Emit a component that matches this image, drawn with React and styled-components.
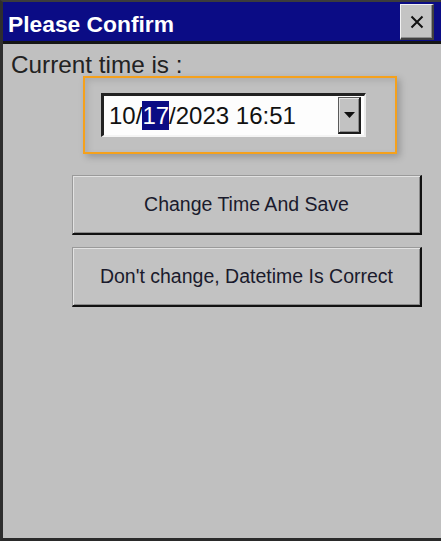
import React from 'react';
import styled, { createGlobalStyle } from 'styled-components';

const GlobalStyle = createGlobalStyle`
  html, body {
    margin: 0;
    padding: 0;
    background: #c0c0c0;
  }
  * {
    box-sizing: border-box;
  }
`;

const Window = styled.div`
  width: 441px;
  height: 541px;
  display: flex;
  flex-direction: column;
  background: #c0c0c0;
  border-top: 2px solid #3c3c3c;
  border-left: 3px solid #2e2e2e;
  border-bottom: 3px solid #2a2a2a;
  font-family: 'Liberation Sans', Arial, sans-serif;
`;

const TitleBar = styled.div`
  height: 42px;
  display: flex;
  align-items: flex-start;
  justify-content: space-between;
  background: #0b0c85;
  border-bottom: 3px solid #151515;
  padding-left: 5px;
`;

const Title = styled.span`
  margin-top: 9px;
  font-size: 22.8px;
  line-height: 26px;
  font-weight: bold;
  color: #ffffff;
`;

const CloseButton = styled.button`
  width: 34px;
  height: 36px;
  margin-top: 2px;
  margin-right: 7px;
  padding: 0;
  display: flex;
  align-items: center;
  justify-content: center;
  background: #c4c4c4;
  border-style: solid;
  border-width: 1px 2px 2px 1px;
  border-color: #f2f2f2 #404040 #404040 #f2f2f2;
  box-shadow: inset -1px -1px 0 #8c8c8c;
  cursor: pointer;
`;

const Body = styled.div`
  flex: 1;
  display: flex;
  flex-direction: column;
  padding: 10px 8px 0 8px;
`;

const Label = styled.div`
  font-size: 24.3px;
  line-height: 22px;
  height: 22px;
  color: #222;
  white-space: nowrap;
`;

const Focus = styled.div`
  width: 314px;
  height: 78px;
  margin-left: 72px;
  padding: 15px 0 0 16px;
  border: 2px solid #f5a11c;
  box-shadow: 3px 3px 7px rgba(0, 0, 0, 0.22), inset 3px 3px 6px rgba(0, 0, 0, 0.1);
`;

const DateField = styled.div`
  width: 265px;
  height: 44px;
  display: flex;
  align-items: center;
  justify-content: space-between;
  background: #fdfdfd;
  border-style: solid;
  border-width: 3px 2px 2px 3px;
  border-color: #222 #ececec #f4f4f4 #222;
  padding: 0 3px 0 5px;
`;

const DateText = styled.span`
  font-size: 24px;
  line-height: 29px;
  color: #111;
  white-space: nowrap;
`;

const Selected = styled.span`
  display: inline-block;
  background: #0c0c84;
  color: #ffffff;
  line-height: 29px;
`;

const DropButton = styled.div`
  width: 23px;
  height: 37px;
  display: flex;
  align-items: center;
  justify-content: center;
  background: #c2c2c2;
  border-style: solid;
  border-width: 1px 2px 2px 1px;
  border-color: #5a5a5a #1c1c1c #1c1c1c #5a5a5a;
  box-shadow: inset 1px 1px 0 #e4e4e4, inset -1px -1px 0 #8a8a8a;
`;

const Actions = styled.div`
  display: flex;
  flex-direction: column;
  gap: 12px;
  margin: 21px 0 0 61px;
`;

const ActionButton = styled.button`
  width: 350px;
  height: 60px;
  padding: 0;
  background: #c2c2c2;
  font-family: 'Liberation Sans', Arial, sans-serif;
  font-size: 19.5px;
  color: #1a1a2c;
  border-style: solid;
  border-width: 1px 2px 2px 1px;
  border-color: #9a9a9a #111 #111 #9a9a9a;
  box-shadow: inset 1px 1px 0 #e2e2e2, inset -1px -1px 0 #8a8a8a;
  cursor: pointer;
`;

export default function App() {
  return (
    <>
      <GlobalStyle />
      <Window>
        <TitleBar>
          <Title>Please Confirm</Title>
          <CloseButton aria-label="Close">
            <svg width="16" height="16" viewBox="0 0 16 16">
              <path d="M2.5 2.5 L13.5 13.5 M13.5 2.5 L2.5 13.5" stroke="#111" strokeWidth="2" />
            </svg>
          </CloseButton>
        </TitleBar>
        <Body>
          <Label>Current time is :</Label>
          <Focus>
            <DateField>
              <DateText>
                10/<Selected>17</Selected>/2023 16:51
              </DateText>
              <DropButton>
                <svg width="11" height="6" viewBox="0 0 11 6">
                  <path d="M0 0 H11 L5.5 6 Z" fill="#111" />
                </svg>
              </DropButton>
            </DateField>
          </Focus>
          <Actions>
            <ActionButton>Change Time And Save</ActionButton>
            <ActionButton>Don't change, Datetime Is Correct</ActionButton>
          </Actions>
        </Body>
      </Window>
    </>
  );
}
